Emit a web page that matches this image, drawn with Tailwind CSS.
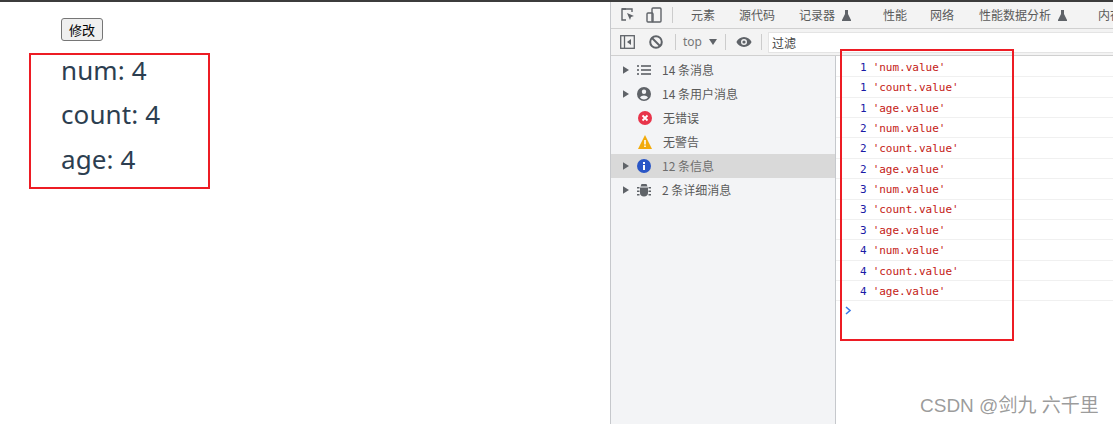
<!DOCTYPE html>
<html lang="zh">
<head>
<meta charset="UTF-8">
<title>console</title>
<script src="https://cdn.jsdelivr.net/npm/@tailwindcss/browser@4"></script>
</head>
<body class="bg-white">
<div class="relative w-[1113px] h-[424px] overflow-hidden border-t-2 border-[#3c3c3c] font-['Noto_Sans','Noto_Sans_CJK_SC',sans-serif]">
  <div class="flex h-full">
    <!-- page -->
    <main class="w-[610px] shrink-0 pl-[61px] pt-[16px]">
      <button class="block w-[42px] h-[23px] bg-[#efefef] border border-[#767676] rounded-[3px] text-[13px] leading-none text-black font-['Noto_Sans_CJK_SC',sans-serif]">修改</button>
      <div class="mt-[7px] text-[26px] tracking-[0.1px] leading-[44.4px] text-[#2c3e50] font-['Noto_Sans',sans-serif]">
        <p>num: 4</p>
        <p>count: 4</p>
        <p>age: 4</p>
      </div>
    </main>

    <!-- devtools -->
    <section class="flex-1 flex flex-col border-l border-[#c6c8cc] text-[12px] text-[#5a5a5a] font-['Noto_Sans_CJK_SC',sans-serif]">
      <!-- tabs -->
      <div class="h-[27px] shrink-0 flex items-center bg-[#f3f3f3] border-b border-[#d0d0d0] pl-[9px] whitespace-nowrap overflow-hidden">
        <svg class="w-[16px] h-[16px]" viewBox="0 0 16 16" fill="none" stroke="#5f6368" stroke-width="1.4"><path d="M6 2H2v11h4"/><path d="M2 2h10v3" /><path d="M7 6l7 3-3 1 -1 3z" fill="#5f6368" stroke="none"/></svg>
        <svg class="w-[16px] h-[16px] ml-[10px]" viewBox="0 0 16 16" fill="none" stroke="#5f6368" stroke-width="1.4"><rect x="6" y="1" width="9" height="14" rx="1"/><rect x="1" y="6" width="6" height="9" rx="1"/></svg>
        <span class="w-px h-[16px] bg-[#ccc] ml-[10px]"></span>
        <span class="ml-[18px]">元素</span>
        <span class="ml-[24px]">源代码</span>
        <span class="ml-[24px]">记录器</span>
        <svg class="w-[11px] h-[11px] ml-[6px]" viewBox="0 0 11 11" fill="#5f6368"><path d="M4 0h3v4l3 6v1H1v-1l3-6z"/></svg>
        <span class="ml-[31px]">性能</span>
        <span class="ml-[23px]">网络</span>
        <span class="ml-[25px]">性能数据分析</span>
        <svg class="w-[11px] h-[11px] ml-[6px]" viewBox="0 0 11 11" fill="#5f6368"><path d="M4 0h3v4l3 6v1H1v-1l3-6z"/></svg>
        <span class="ml-[30px]">内存</span>
      </div>
      <!-- console toolbar -->
      <div class="h-[27px] shrink-0 flex items-center bg-[#f3f3f3] border-b border-[#d0d0d0] pl-[9px]">
        <svg class="w-[15px] h-[14px]" viewBox="0 0 15 14" fill="none" stroke="#5f6368" stroke-width="1.3"><rect x=".7" y=".7" width="13.6" height="12.6"/><path d="M4.5 1v12"/><path d="M11 4v6L7 7z" fill="#5f6368" stroke="none"/></svg>
        <svg class="w-[14px] h-[14px] ml-[14px]" viewBox="0 0 14 14" fill="none" stroke="#5f6368" stroke-width="2"><circle cx="7" cy="7" r="5.8"/><path d="M3 3l8 8"/></svg>
        <span class="w-px h-[16px] bg-[#ccc] ml-[12px]"></span>
        <span class="ml-[7px] font-['Noto_Sans',sans-serif] text-[#777]">top</span>
        <svg class="w-[8px] h-[6px] ml-[7px]" viewBox="0 0 8 6" fill="#5f6368"><path d="M0 0h8L4 6z"/></svg>
        <span class="w-px h-[16px] bg-[#ccc] ml-[8px]"></span>
        <svg class="w-[16px] h-[12px] ml-[10px]" viewBox="0 0 16 12" fill="#5f6368"><path fill-rule="evenodd" d="M8 1c3.5 0 6.300 2.200 7.600 5C14.300 8.800 11.500 11 8 11S1.700 8.800.4 6C1.700 3.200 4.500 1 8 1zm0 2a3 3 0 100 6 3 3 0 000-6z"/><circle cx="8" cy="6" r="1.600"/></svg>
        <span class="w-px h-[16px] bg-[#ccc] ml-[9px]"></span>
        <div class="ml-[6px] flex-1 h-[21px] bg-white border border-[#e4e4e4] pl-[3px] leading-[19px] text-[#444]">过滤</div>
      </div>
      <!-- body -->
      <div class="flex flex-1 min-h-0">
        <aside class="w-[225px] shrink-0 bg-[#f3f4f6] border-r border-[#c6c8cc] pt-[2px]">
          <div class="h-[24px] flex items-center pl-[12px]">
            <svg class="w-[6px] h-[8px]" viewBox="0 0 7 9" fill="#5f6368"><path d="M0 0l7 4.500L0 9z"/></svg>
            <svg class="w-[14px] h-[10px] ml-[8px]" viewBox="0 0 14 10" fill="#7a7d82"><path d="M0 0h2v2H0zM4 0h10v2H4zM0 4h2v2H0zM4 4h10v2H4zM0 8h2v2H0zM4 8h10v2H4z"/></svg>
            <span class="ml-[11px]">14 条消息</span>
          </div>
          <div class="h-[24px] flex items-center pl-[12px]">
            <svg class="w-[6px] h-[8px]" viewBox="0 0 7 9" fill="#5f6368"><path d="M0 0l7 4.500L0 9z"/></svg>
            <svg class="w-[14px] h-[14px] ml-[8px]" viewBox="0 0 14 14" fill="#5f6368"><path fill-rule="evenodd" d="M7 0a7 7 0 110 14A7 7 0 017 0zm0 2.500a2.200 2.200 0 100 4.400 2.200 2.200 0 000-4.400zM3 10.500c1 1.300 2.400 2 4 2s3-.7 4-2c-.6-1.300-2.400-2-4-2s-3.400.7-4 2z"/></svg>
            <span class="ml-[11px]">14 条用户消息</span>
          </div>
          <div class="h-[24px] flex items-center pl-[27px]">
            <svg class="w-[14px] h-[14px]" viewBox="0 0 14 14"><circle cx="7" cy="7" r="7" fill="#e8344a"/><path d="M4.500 4.500l5 5M9.500 4.500l-5 5" stroke="#fff" stroke-width="1.800"/></svg>
            <span class="ml-[11px]">无错误</span>
          </div>
          <div class="h-[24px] flex items-center pl-[27px]">
            <svg class="w-[14px] h-[14px]" viewBox="0 0 14 14"><path d="M7 0l7 14H0z" fill="#f2ab0c"/><path d="M6.200 5h1.600v4.500H6.200zM6.200 10.500h1.600V12H6.200z" fill="#fff"/></svg>
            <span class="ml-[11px]">无警告</span>
          </div>
          <div class="h-[24px] flex items-center pl-[12px] bg-[#d9d9d9] text-[#6e6e6e]">
            <svg class="w-[6px] h-[8px]" viewBox="0 0 7 9" fill="#5f6368"><path d="M0 0l7 4.500L0 9z"/></svg>
            <svg class="w-[14px] h-[14px] ml-[8px]" viewBox="0 0 14 14"><circle cx="7" cy="7" r="7" fill="#2a56c6"/><path d="M6 3h2v2H6zM6 6h2v5H6z" fill="#fff"/></svg>
            <span class="ml-[11px]">12 条信息</span>
          </div>
          <div class="h-[24px] flex items-center pl-[12px]">
            <svg class="w-[6px] h-[8px]" viewBox="0 0 7 9" fill="#5f6368"><path d="M0 0l7 4.500L0 9z"/></svg>
            <svg class="w-[14px] h-[14px] ml-[8px]" viewBox="0 0 14 14" fill="#5f6368"><path d="M4.500 1h5l1 2.500h-7zM3 4.500h8V10c0 2-1.500 3.500-4 3.500S3 12 3 10zM0 4h2.500v1.500H0zM11.500 4H14v1.500h-2.500zM0 7.500h2.500V9H0zM11.500 7.500H14V9h-2.500zM0 11h2.500v1.500H0zM11.500 11H14v1.500h-2.500z"/></svg>
            <span class="ml-[11px]">2 条详细消息</span>
          </div>
        </aside>
        <div class="flex-1 pt-[1px] font-['DejaVu_Sans_Mono',monospace] text-[11px]">
          <div class="h-[20.360px] flex items-center border-b border-[#f0f0f0] pl-[24px] pt-[3px]"><span class="text-[#1a1aa6]">1</span><span class="ml-[6px] text-[#c41a16]">'num.value'</span></div>
          <div class="h-[20.360px] flex items-center border-b border-[#f0f0f0] pl-[24px] pt-[3px]"><span class="text-[#1a1aa6]">1</span><span class="ml-[6px] text-[#c41a16]">'count.value'</span></div>
          <div class="h-[20.360px] flex items-center border-b border-[#f0f0f0] pl-[24px] pt-[3px]"><span class="text-[#1a1aa6]">1</span><span class="ml-[6px] text-[#c41a16]">'age.value'</span></div>
          <div class="h-[20.360px] flex items-center border-b border-[#f0f0f0] pl-[24px] pt-[3px]"><span class="text-[#1a1aa6]">2</span><span class="ml-[6px] text-[#c41a16]">'num.value'</span></div>
          <div class="h-[20.360px] flex items-center border-b border-[#f0f0f0] pl-[24px] pt-[3px]"><span class="text-[#1a1aa6]">2</span><span class="ml-[6px] text-[#c41a16]">'count.value'</span></div>
          <div class="h-[20.360px] flex items-center border-b border-[#f0f0f0] pl-[24px] pt-[3px]"><span class="text-[#1a1aa6]">2</span><span class="ml-[6px] text-[#c41a16]">'age.value'</span></div>
          <div class="h-[20.360px] flex items-center border-b border-[#f0f0f0] pl-[24px] pt-[3px]"><span class="text-[#1a1aa6]">3</span><span class="ml-[6px] text-[#c41a16]">'num.value'</span></div>
          <div class="h-[20.360px] flex items-center border-b border-[#f0f0f0] pl-[24px] pt-[3px]"><span class="text-[#1a1aa6]">3</span><span class="ml-[6px] text-[#c41a16]">'count.value'</span></div>
          <div class="h-[20.360px] flex items-center border-b border-[#f0f0f0] pl-[24px] pt-[3px]"><span class="text-[#1a1aa6]">3</span><span class="ml-[6px] text-[#c41a16]">'age.value'</span></div>
          <div class="h-[20.360px] flex items-center border-b border-[#f0f0f0] pl-[24px] pt-[3px]"><span class="text-[#1a1aa6]">4</span><span class="ml-[6px] text-[#c41a16]">'num.value'</span></div>
          <div class="h-[20.360px] flex items-center border-b border-[#f0f0f0] pl-[24px] pt-[3px]"><span class="text-[#1a1aa6]">4</span><span class="ml-[6px] text-[#c41a16]">'count.value'</span></div>
          <div class="h-[20.360px] flex items-center border-b border-[#f0f0f0] pl-[24px] pt-[3px]"><span class="text-[#1a1aa6]">4</span><span class="ml-[6px] text-[#c41a16]">'age.value'</span></div>
          <svg class="w-[7px] h-[9px] ml-[9px] mt-[5px]" viewBox="0 0 7 9" fill="none" stroke="#3b78e7" stroke-width="1.600"><path d="M1 1l4 3.500L1 8"/></svg>
        </div>
      </div>
    </section>
  </div>

  <!-- red annotation boxes drawn over the screenshot -->
  <div class="absolute left-[29px] top-[51px] w-[181px] h-[136px] border-2 border-[#ed1c24]"></div>
  <div class="absolute left-[840px] top-[47px] w-[174px] h-[292px] border-2 border-[#ed1c24]"></div>
  <!-- watermark -->
  <div class="absolute left-[920px] top-[391px] text-[19px] leading-[26px] text-[#8a8a8a]/85 whitespace-nowrap font-['Liberation_Sans','Noto_Sans_CJK_SC',sans-serif]">CSDN @剑九 六千里</div>
</div>
</body>
</html>
